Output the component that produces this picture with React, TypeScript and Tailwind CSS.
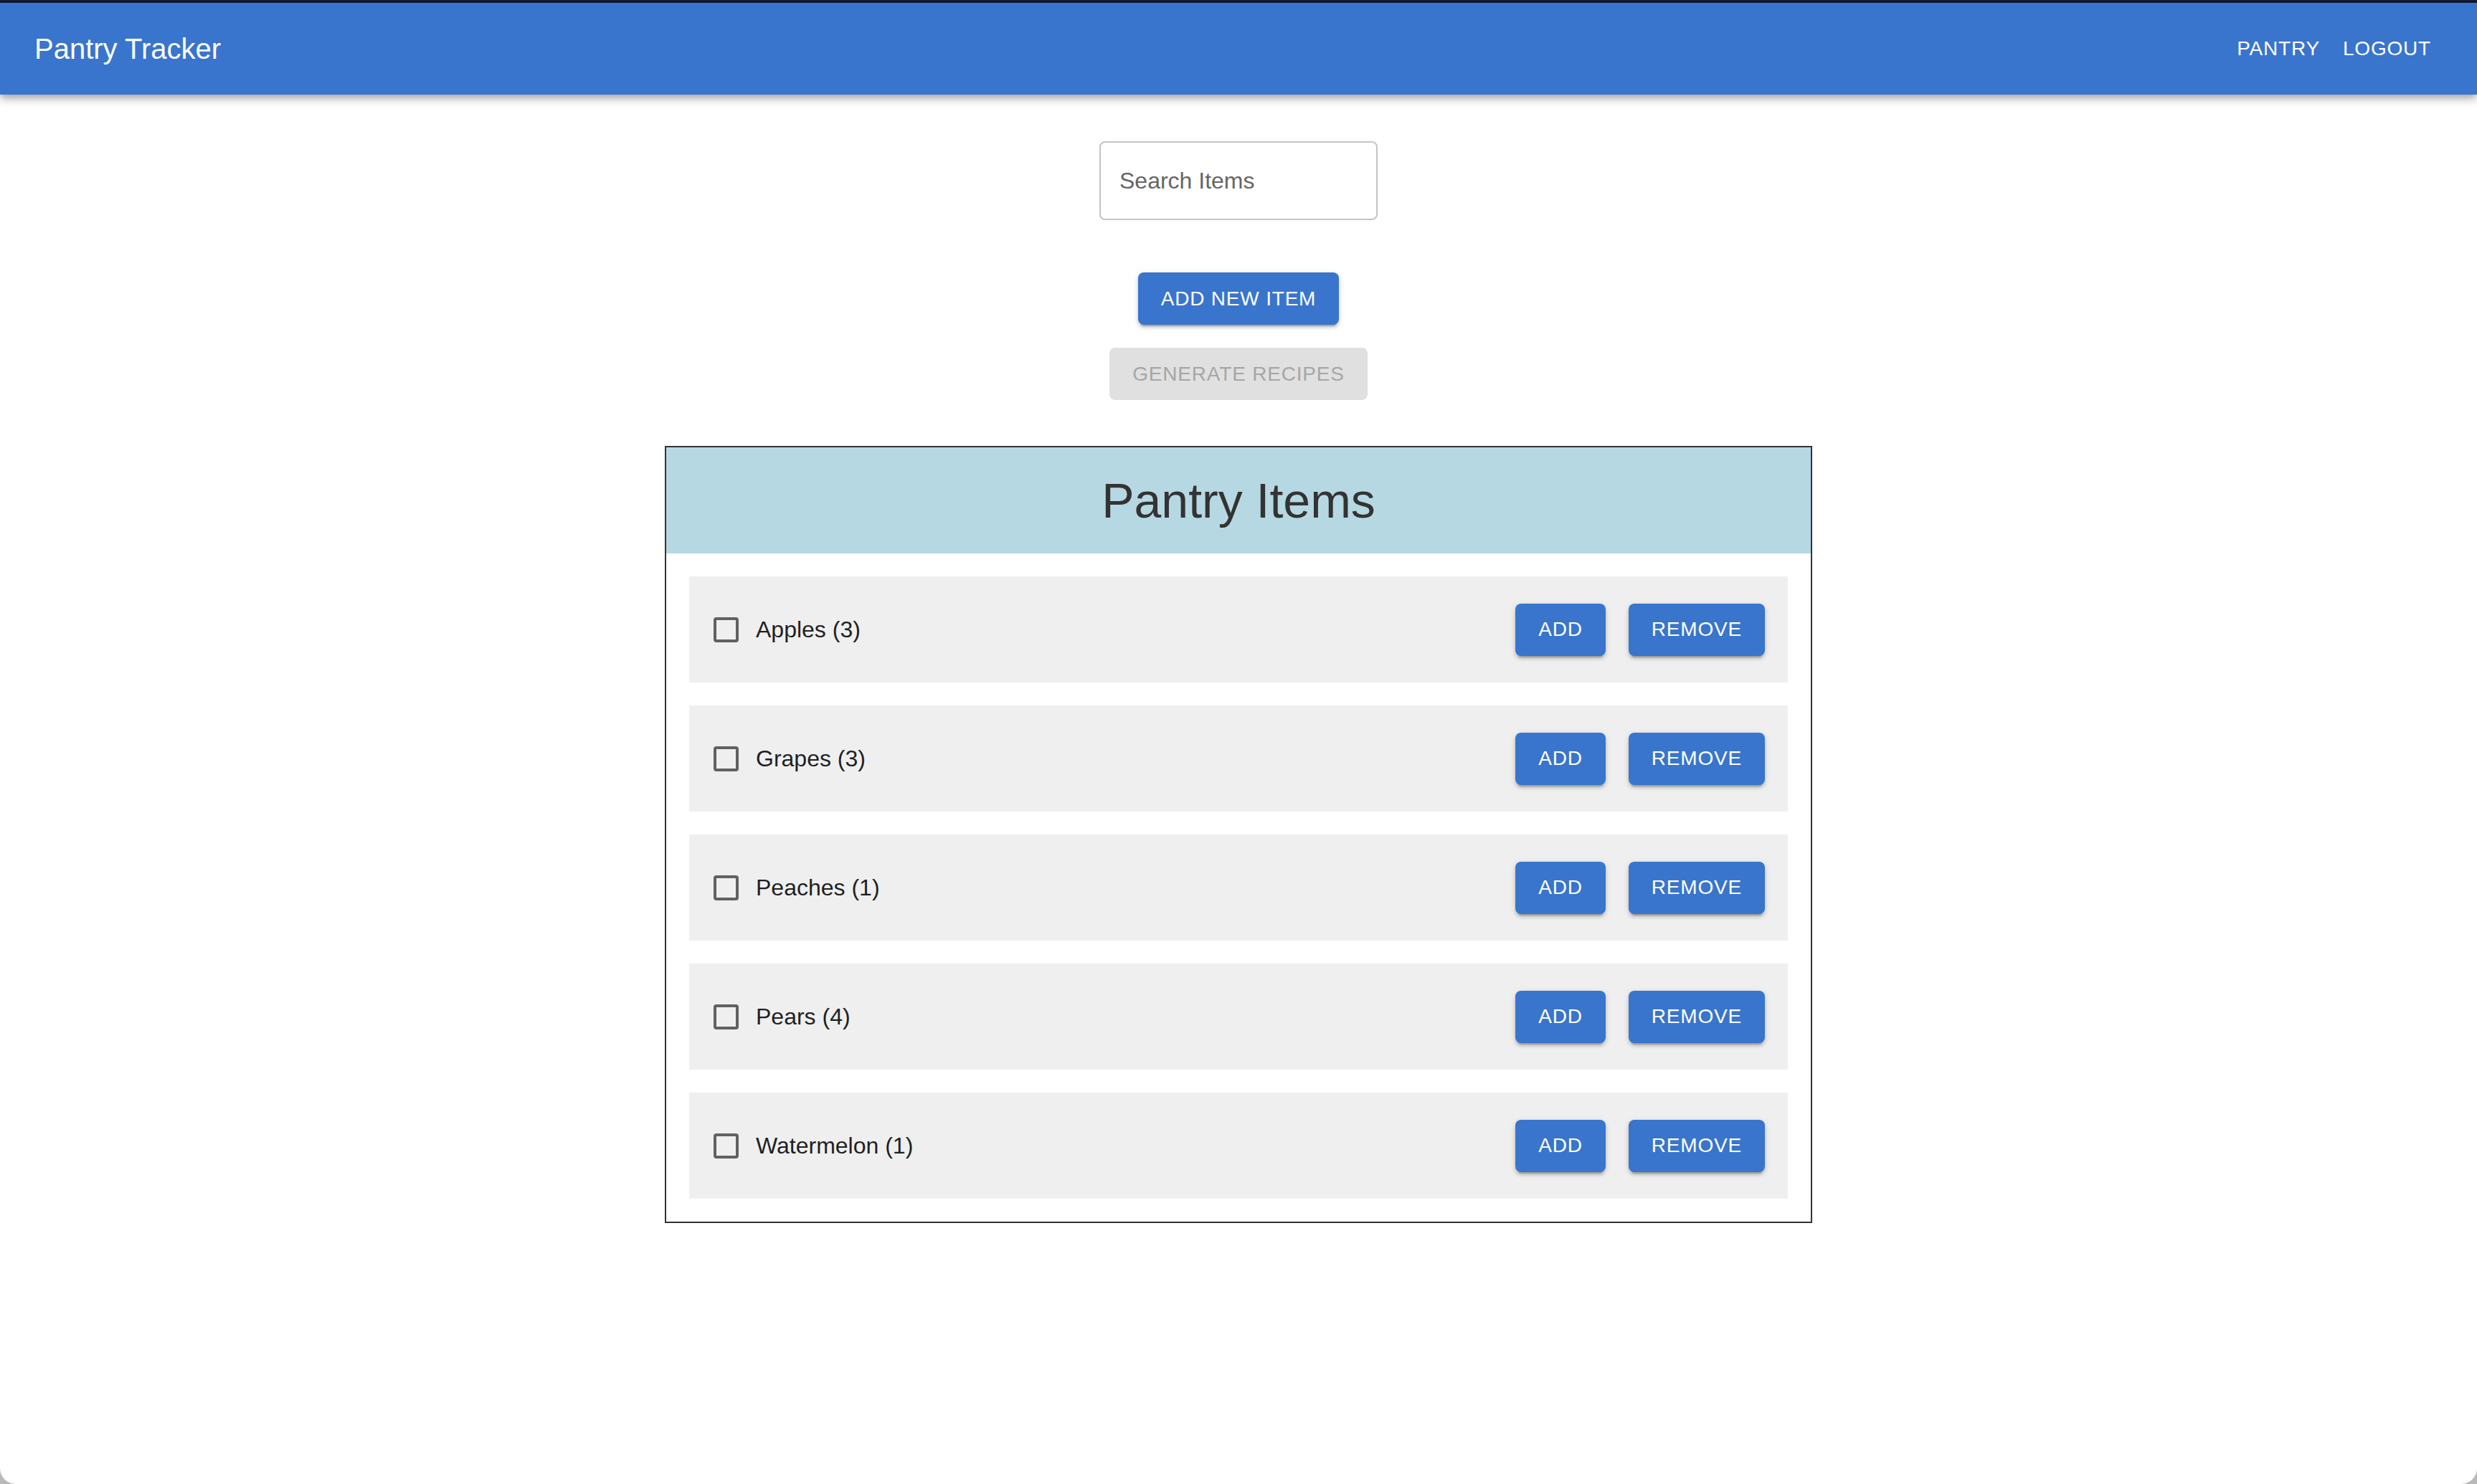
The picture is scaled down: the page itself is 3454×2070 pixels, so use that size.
import React from "react";

const items = [
  { name: "Apples", count: 3 },
  { name: "Grapes", count: 3 },
  { name: "Peaches", count: 1 },
  { name: "Pears", count: 4 },
  { name: "Watermelon", count: 1 },
];

const btnShadow =
  "shadow-[0_6px_2px_-4px_rgba(0,0,0,0.2),0_4px_4px_0_rgba(0,0,0,0.14),0_2px_10px_0_rgba(0,0,0,0.12)]";

const ItemRow = ({ name, count }: { name: string; count: number }) => (
  <div className="flex h-[148px] items-center justify-between bg-[#efefef] pl-[34px] pr-[32px]">
    <div className="flex items-center gap-[24px]">
      <span className="block h-[35px] w-[35px] rounded-[4px] border-[4px] border-[#616161]" />
      <span className="text-[32px] leading-none text-[#1f1f1f]">
        {name} ({count})
      </span>
    </div>
    <div className="flex items-center gap-[32px]">
      <button
        className={`h-[73px] rounded-[8px] bg-[#3975cc] px-[32px] text-[28px] uppercase tracking-[0.8px] text-white ${btnShadow}`}
      >
        Add
      </button>
      <button
        className={`h-[73px] rounded-[8px] bg-[#3975cc] px-[32px] text-[28px] uppercase tracking-[0.8px] text-white ${btnShadow}`}
      >
        Remove
      </button>
    </div>
  </div>
);

export default function App() {
  return (
    <div className="bg-[#b9b9b9] font-['Liberation_Sans',Arial,sans-serif]">
      <div className="flex h-[2070px] flex-col overflow-hidden rounded-b-[22px] bg-white">
        <div className="h-[4px] shrink-0 bg-[#141b35]" />
        <header className="relative z-10 flex h-[128px] shrink-0 items-center justify-between bg-[#3975cc] px-[48px] shadow-[0_4px_8px_-2px_rgba(0,0,0,0.2),0_8px_10px_0_rgba(0,0,0,0.14),0_2px_20px_0_rgba(0,0,0,0.12)]">
          <h1 className="text-[40px] font-normal text-white">Pantry Tracker</h1>
          <nav className="flex items-center">
            <button className="px-[16px] py-[12px] text-[28px] uppercase tracking-[0.8px] text-white">
              Pantry
            </button>
            <button className="px-[16px] py-[12px] text-[28px] uppercase tracking-[0.8px] text-white">
              Logout
            </button>
          </nav>
        </header>

        <main className="flex flex-col items-center pt-[65px]">
          <input
            placeholder="Search Items"
            className="h-[110px] w-[388px] rounded-[8px] border-2 border-[#c4c4c4] px-[26px] text-[32px] text-[#222] outline-none placeholder:text-[#666]"
          />
          <button
            className={`mt-[73px] h-[73px] rounded-[8px] bg-[#3975cc] px-[32px] text-[28px] uppercase tracking-[0.8px] text-white ${btnShadow}`}
          >
            Add New Item
          </button>
          <button
            disabled
            className="mt-[32px] h-[73px] rounded-[8px] bg-[#e0e0e0] px-[32px] text-[28px] uppercase tracking-[0.8px] text-[#a6a6a6]"
          >
            Generate Recipes
          </button>

          <section className="mt-[64px] flex w-[1600px] flex-col border-2 border-[#333]">
            <div className="flex h-[148px] items-center justify-center bg-[#b6d8e3]">
              <h2 className="text-[68px] font-normal text-[#333]">Pantry Items</h2>
            </div>
            <div className="flex flex-col gap-[32px] p-[32px]">
              {items.map((it) => (
                <ItemRow key={it.name} name={it.name} count={it.count} />
              ))}
            </div>
          </section>
        </main>
      </div>
    </div>
  );
}
